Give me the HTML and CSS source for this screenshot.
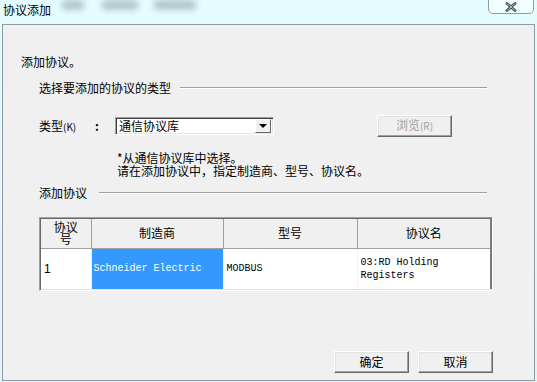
FILE: index.html
```html
<!DOCTYPE html>
<html lang="zh-CN">
<head>
<meta charset="UTF-8" />
<meta name="viewport" content="width=device-width, initial-scale=1" />
<title>协议添加</title>
<link rel="stylesheet" href="styles.css">
</head>
<body>
<div class="window">
  <div class="titlebar">
    <span class="title">协议添加</span>
    <!-- 背景中模糊的菜单残影 -->
    <span class="blur b1"></span>
    <span class="blur b2"></span>
    <span class="blur b3"></span>
    <button class="close" aria-label="关闭">
      <svg width="12" height="10" viewBox="0 0 12 10">
        <path d="M2 1.5 L10 8.5 M10 1.5 L2 8.5" stroke="#3d4a55" stroke-width="2.8" stroke-linecap="round" />
        <path d="M2 1.5 L10 8.5 M10 1.5 L2 8.5" stroke="#c9d3da" stroke-width="0.9" stroke-linecap="round" />
      </svg>
    </button>
  </div>

  <div class="client">
    <p class="intro">添加协议。</p>

    <div class="group">
      <div class="group-title"><span>选择要添加的协议的类型</span><i class="rule"></i></div>
      <div class="type-row">
        <label class="type-label" for="typeSel">类型<small>(K)</small></label>
        <span class="colon">:</span>
        <div class="combo" id="typeSel">
          <span class="combo-text">通信协议库</span>
          <span class="drop"><i class="arrow"></i></span>
        </div>
        <button class="btn browse" disabled>浏览<small>(R)</small></button>
      </div>
      <p class="note">*从通信协议库中选择。<br>请在添加协议中，指定制造商、型号、协议名。</p>
    </div>

    <div class="group">
      <div class="group-title"><span>添加协议</span><i class="rule wide"></i></div>
      <div class="list">
        <table>
          <colgroup>
            <col class="c1"><col class="c2"><col class="c3"><col class="c4">
          </colgroup>
          <thead>
            <tr>
              <th>协议号</th>
              <th>制造商</th>
              <th>型号</th>
              <th>协议名</th>
            </tr>
          </thead>
          <tbody>
            <tr>
              <td class="num">1</td>
              <td class="sel">Schneider Electric</td>
              <td>MODBUS</td>
              <td>03:RD Holding<br>Registers</td>
            </tr>
          </tbody>
        </table>
      </div>
    </div>

    <div class="actions">
      <button class="btn">确定</button>
      <button class="btn">取消</button>
    </div>
  </div>
</div>
</body>
</html>
```

FILE: styles.css
```css
/* 对话框整体 */
body { margin: 0; background: #e4f3fa; font: 12px "Noto Sans CJK SC", "Liberation Sans", sans-serif; color: #000; }
.window { width: 537px; height: 382px; display: flex; flex-direction: column; background: linear-gradient(#e5fdff, #e3f1f8); }

/* 标题栏 */
.titlebar { height: 24px; display: flex; align-items: flex-start; }
.title { margin: 4px 0 0 3px; line-height: 12px; }
.blur { height: 10px; margin-top: 0; background: rgba(80, 95, 110, 0.35); filter: blur(3px); border-radius: 3px; }
.b1 { width: 22px; margin-left: 11px; }
.b2 { width: 36px; margin-left: 18px; }
.b3 { width: 42px; margin-left: 16px; }
.close { margin-left: auto; margin-right: 3px; width: 46px; height: 15px; margin-top: -1px; padding: 0; border: 1px solid #8e9ca8; border-radius: 0 0 5px 5px; background: #f3feff; display: flex; align-items: center; justify-content: center; }

/* 客户区 */
.client { margin: 0 2px 1px; height: 358px; box-sizing: border-box; border: 1px solid #8e9ba4; background: #f0f0f0; display: flex; flex-direction: column; }
.intro { margin: 31px 0 0 18px; line-height: 12px; }
.group { margin: 0 47px 0 36px; }
.group-title { display: flex; align-items: center; height: 12px; line-height: 12px; margin-top: 14px; }
.rule { flex: 1; border-top: 1px solid #a0a0a0; border-bottom: 1px solid #fff; margin-left: 9px; }
.rule.wide { margin-left: 12px; }
.group + .group .group-title { margin-top: 10px; }

.type-row { display: flex; align-items: center; height: 22px; margin-top: 21px; }
.type-label { width: 56px; }
small { font-size: 10px; }
.colon { width: 20px; font-weight: bold; }
.combo { width: 159px; height: 18px; box-sizing: border-box; background: #fff; border: 1px solid; border-color: #a0a0a0 #fff #fff #a0a0a0; box-shadow: inset 1px 1px #404040, inset -1px -1px #e3e3e3; display: flex; align-items: center; padding: 0 2px 0 3px; }
.combo-text { flex: 1; line-height: 12px; }
.drop { width: 16px; height: 14px; box-sizing: border-box; background: #f0f0f0; border: 1px solid; border-color: #fff #696969 #696969 #fff; display: flex; align-items: center; justify-content: center; }
.arrow { width: 0; height: 0; border-left: 4px solid transparent; border-right: 4px solid transparent; border-top: 4px solid #000; }

.btn { width: 75px; height: 22px; padding: 0; font: inherit; line-height: 12px; background: #f0f0f0; border: 1px solid; border-color: #fff #696969 #696969 #fff; box-shadow: inset -1px -1px #a0a0a0, inset 1px 1px #e3e3e3; color: #000; }
.browse { margin-left: 103px; color: #a0a0a0; }

.note { margin: 14px 0 0 78px; line-height: 13px; }

/* 列表 */
.list { margin-top: 18px; width: 454px; box-sizing: border-box; border: 1px solid; border-color: #a0a0a0 #fff #fff #a0a0a0; box-shadow: inset 1px 1px #696969, inset -1px -1px #e3e3e3; padding: 1px; }
table { width: 450px; border-collapse: collapse; table-layout: fixed; }
.c1 { width: 50px; }
.c2 { width: 132px; }
.c3 { width: 134px; }
.c4 { width: 134px; }
th { height: 29px; padding: 0 8px; background: #f0f0f0; font-weight: normal; line-height: 12px; text-align: center; border-right: 1px solid #a0a0a0; border-bottom: 1px solid #a0a0a0; }
th:last-child { border-right: 2px solid #7a7a7a; }
td { height: 40px; padding: 0 3px; background: #fff; font: 10px "Liberation Mono", monospace; line-height: 13px; border-right: 1px solid #f0f0f0; vertical-align: middle; }
td.num { font: 12px "Liberation Sans", sans-serif; }
td.sel { background: #3399ff; color: #fff; padding-left: 2px; }
td:last-child { border-right: 2px solid #7a7a7a; }

/* 底部按钮 */
.actions { margin-top: auto; display: flex; justify-content: flex-end; gap: 9px; padding: 0 41px 7px 0; }
```
